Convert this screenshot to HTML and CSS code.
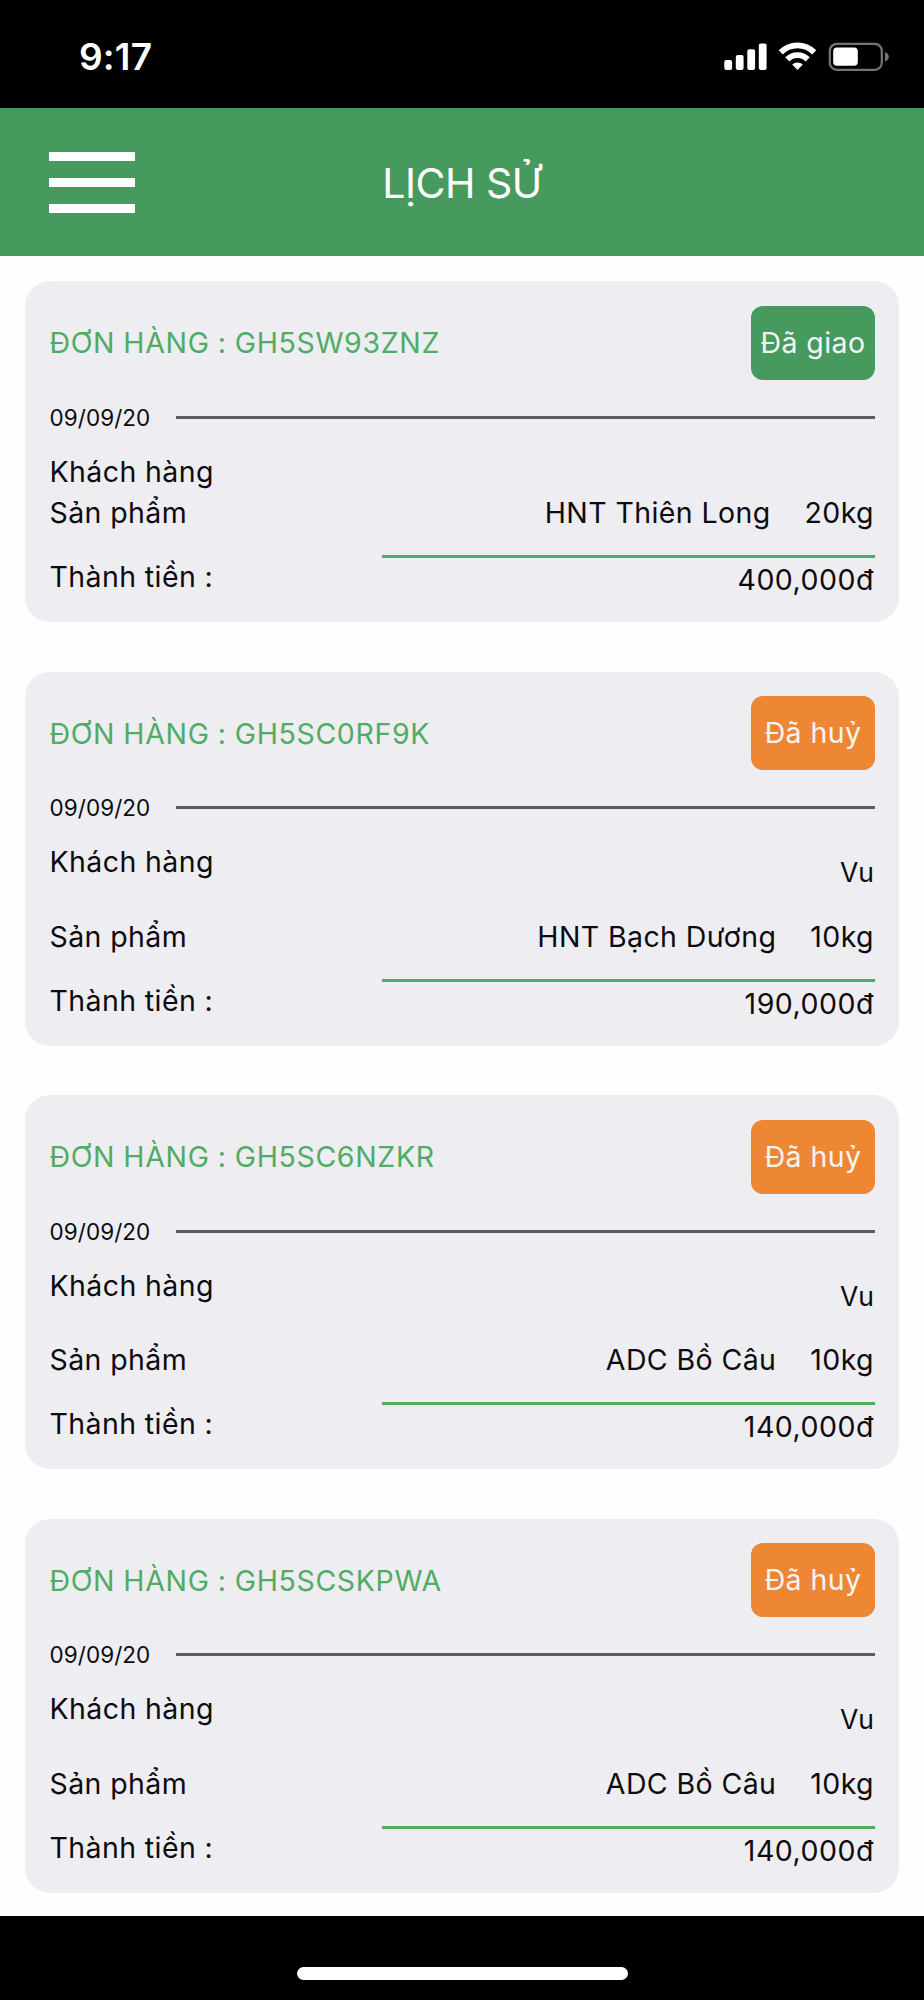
FILE: index.html
```
<!DOCTYPE html>
<html lang="vi">
<head>
  <meta charset="UTF-8" />
  <meta name="viewport" content="width=device-width, initial-scale=1.0"/>
  <title>Lịch sử</title>
  <link rel="stylesheet" href="styles.css">
</head>
<body>
  <div class="status-bar">
    <span class="time">9:17</span>
    <svg class="status-icons" width="166" height="30" viewBox="0 0 166 30">
      <!-- signal -->
      <g fill="#fff">
        <rect x="0.3" y="18" width="7.8" height="10" rx="2"/>
        <rect x="11.8" y="13" width="7.8" height="15" rx="2"/>
        <rect x="23.3" y="7.3" width="7.8" height="20.7" rx="2"/>
        <rect x="34.8" y="1.5" width="7.8" height="26.5" rx="2"/>
      </g>
      <!-- wifi -->
      <g fill="none" stroke="#fff" stroke-width="5.8">
        <path d="M56.8 10.4A23.4 23.4 0 0 1 90.2 10.4"/>
        <path d="M63.3 17.4A14.3 14.3 0 0 1 83.7 17.4"/>
      </g>
      <path d="M73.5 28L68.2 22.6A7.6 7.6 0 0 1 78.8 22.6Z" fill="#fff"/>
      <!-- battery -->
      <rect x="105.8" y="1.8" width="52" height="26" rx="7" fill="none" stroke="#747474" stroke-width="2.2"/>
      <rect x="109.2" y="5.4" width="24.6" height="18.4" rx="3.8" fill="#fff"/>
      <path d="M161 10Q164.8 11.5 164.8 14.7Q164.8 18 161 19.5Z" fill="#747474"/>
    </svg>
  </div>

  <header>
    <div class="menu-btn">
      <span></span>
      <span></span>
      <span></span>
    </div>
    <h1>LỊCH SỬ</h1>
  </header>

  <main class="orders">
    <div class="order">
      <div class="order-head">
        <span class="order-code">ĐƠN HÀNG : GH5SW93ZNZ</span>
        <span class="badge delivered">Đã giao</span>
      </div>
      <div class="order-date"><span>09/09/20</span><hr></div>
      <div class="row"><span>Khách hàng</span></div>
      <div class="row product"><span>Sản phẩm</span><span class="name">HNT Thiên Long</span><span>20kg</span></div>
      <div class="total"><span>Thành tiền :</span><span class="amount">400,000đ</span></div>
    </div>

    <div class="order">
      <div class="order-head">
        <span class="order-code">ĐƠN HÀNG : GH5SC0RF9K</span>
        <span class="badge canceled">Đã huỷ</span>
      </div>
      <div class="order-date"><span>09/09/20</span><hr></div>
      <div class="row customer"><span>Khách hàng</span><span class="customer-name">Vu</span></div>
      <div class="row product"><span>Sản phẩm</span><span class="name">HNT Bạch Dương</span><span>10kg</span></div>
      <div class="total"><span>Thành tiền :</span><span class="amount">190,000đ</span></div>
    </div>

    <div class="order">
      <div class="order-head">
        <span class="order-code">ĐƠN HÀNG : GH5SC6NZKR</span>
        <span class="badge canceled">Đã huỷ</span>
      </div>
      <div class="order-date"><span>09/09/20</span><hr></div>
      <div class="row customer"><span>Khách hàng</span><span class="customer-name">Vu</span></div>
      <div class="row product"><span>Sản phẩm</span><span class="name">ADC Bồ Câu</span><span>10kg</span></div>
      <div class="total"><span>Thành tiền :</span><span class="amount">140,000đ</span></div>
    </div>

    <div class="order">
      <div class="order-head">
        <span class="order-code">ĐƠN HÀNG : GH5SCSKPWA</span>
        <span class="badge canceled">Đã huỷ</span>
      </div>
      <div class="order-date"><span>09/09/20</span><hr></div>
      <div class="row customer"><span>Khách hàng</span><span class="customer-name">Vu</span></div>
      <div class="row product"><span>Sản phẩm</span><span class="name">ADC Bồ Câu</span><span>10kg</span></div>
      <div class="total"><span>Thành tiền :</span><span class="amount">140,000đ</span></div>
    </div>
  </main>

  <footer>
    <div class="home-bar"></div>
  </footer>
</body>
</html>
```
FILE: styles.css
```
* {
  box-sizing: border-box;
}

body {
  margin: 0;
  height: 2000px;
  display: flex;
  flex-direction: column;
  overflow: hidden;
  font-family: 'Inter', sans-serif;
  font-size: 28.5px;
  letter-spacing: 0.4px;
  color: #0c0c0e;
  background-color: #fefefe;
}

.status-bar {
  height: 108px;
  flex-shrink: 0;
  display: flex;
  justify-content: space-between;
  align-items: flex-start;
  padding: 42px 34px 0 79px;
  background-color: #000;
}

.time {
  color: #fff;
  font-size: 37px;
  font-weight: 600;
  line-height: 30px;
  letter-spacing: 0.2px;
}

header {
  height: 148px;
  flex-shrink: 0;
  display: grid;
  grid-template-columns: 86px 1fr 86px;
  align-items: center;
  padding: 1px 49px 0;
  background-color: #479a5e;
}

.menu-btn {
  display: flex;
  flex-direction: column;
  gap: 17px;
}

.menu-btn span {
  height: 9px;
  background-color: #fff;
}

h1 {
  margin: 0;
  padding-top: 1px;
  color: #fff;
  font-size: 41px;
  font-weight: 400;
  text-align: center;
  letter-spacing: -0.5px;
}

.orders {
  flex: 1;
  display: flex;
  flex-direction: column;
  gap: 49.5px;
  padding: 25px 25px 23px;
}

.order {
  padding: 24.5px 24px 0 24.5px;
  border-radius: 25px;
  background-color: #eeedf2;
}

.order-head {
  display: flex;
  justify-content: space-between;
  align-items: center;
  height: 74px;
}

.order-code {
  color: #4fac63;
  letter-spacing: 0.65px;
  word-spacing: -0.5px;
}

.badge {
  width: 124px;
  height: 74px;
  line-height: 74px;
  border-radius: 12px;
  text-align: center;
  color: #f5f4f5;
}

.delivered {
  background-color: #479a5e;
}

.canceled {
  background-color: #ed8733;
}

.order-date {
  display: flex;
  justify-content: space-between;
  align-items: center;
  height: 30px;
  margin: 22.5px 0 18.5px;
  font-size: 22.5px;
  letter-spacing: 0.05px;
}

.order-date hr {
  width: 699px;
  height: 3px;
  margin: 0;
  border: 0;
  background-color: #5c5c60;
}

.row {
  display: flex;
  height: 41.5px;
  line-height: 41.5px;
}

.customer {
  height: 74.5px;
  justify-content: space-between;
}

.customer-name {
  padding: 11px 1px 0 0;
  font-size: 26.5px;
  letter-spacing: 0;
}

.product {
  padding-right: 1px;
}

.product .name {
  margin-left: auto;
  margin-right: 34px;
}

.total {
  display: flex;
  justify-content: space-between;
  height: 88.5px;
  padding-top: 21.5px;
  line-height: 43px;
}

.amount {
  width: 493px;
  height: 48px;
  padding: 0 1px 0 0;
  border-top: 3px solid #4fac63;
  text-align: right;
  letter-spacing: 0.5px;
}

footer {
  height: 84px;
  flex-shrink: 0;
  display: flex;
  justify-content: center;
  align-items: flex-end;
  padding-bottom: 20px;
  background-color: #000;
}

.home-bar {
  width: 331px;
  height: 13px;
  border-radius: 7px;
  background-color: #fff;
}
```
